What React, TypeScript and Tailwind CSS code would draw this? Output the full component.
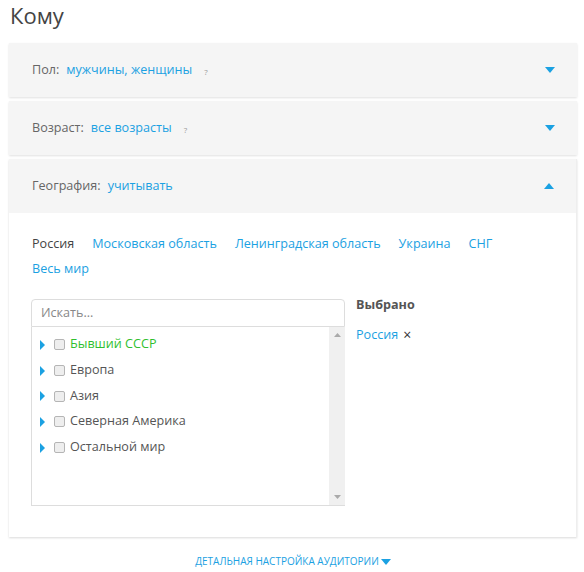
const blue = "text-[#1ba1e2]";

const Caret = ({ up = false }: { up?: boolean }) => (
  <svg width="10" height="6" viewBox="0 0 10 6" className="fill-[#1ba1e2]">
    {up ? <path d="M0 6 L5 0 L10 6 Z" /> : <path d="M0 0 L10 0 L5 6 Z" />}
  </svg>
);

const Header = ({ label, value, hint = false, up = false }: { label: string; value: string; hint?: boolean; up?: boolean }) => (
  <div className="flex items-center h-[54px] pl-[23px] pr-[22px] bg-[#f5f5f5]">
    <span className="text-[#666]">{label}:</span>
    <span className={`ml-[7px] ${blue}`}>{value}</span>
    {hint && <span className="ml-[12px] text-[8px] text-[#999] mt-[3px]">?</span>}
    <span className="ml-auto">
      <Caret up={up} />
    </span>
  </div>
);

const regions = ["Бывший СССР", "Европа", "Азия", "Северная Америка", "Остальной мир"];

export default function App() {
  return (
    <div className="w-[584px] h-[572px] bg-white font-['Open_Sans',sans-serif] text-[12.6px] text-[#555] overflow-hidden">
      <h1 className="pl-[10px] text-[22px] leading-[30px] text-[#444] font-normal">Кому</h1>
      <div className="px-[9px] pt-[13px] pr-[7px] flex flex-col gap-[4px]">
        <div className="shadow-[0_1px_2px_rgba(0,0,0,0.12)]">
          <Header label="Пол" value="мужчины, женщины" hint />
        </div>
        <div className="shadow-[0_1px_2px_rgba(0,0,0,0.12)]">
          <Header label="Возраст" value="все возрасты" hint />
        </div>
        <div className="shadow-[0_1px_2px_rgba(0,0,0,0.15)] border-r border-[#eee]">
          <Header label="География" value="учитывать" up />
          <div className="bg-white pt-[18px] pb-[31px] pl-[23px] pr-[23px]">
            <div className="flex flex-wrap gap-x-[18px] leading-[25px]">
              <span className="text-[#444]">Россия</span>
              <span className={blue}>Московская область</span>
              <span className={blue}>Ленинградская область</span>
              <span className={blue}>Украина</span>
              <span className={blue}>СНГ</span>
              <span className={blue}>Весь мир</span>
            </div>
            <div className="flex mt-[18px]">
              <div className="w-[314px] -ml-px">
                <div className="h-[28px] border border-[#ddd] rounded-t-[4px] flex items-center pl-[9px] text-[#888]">
                  Искать...
                </div>
                <div className="flex h-[179px] border-l border-b border-[#ddd]">
                  <div className="flex-1 pt-[5px]">
                    {regions.map((r, i) => (
                      <div key={r} className="flex items-center h-[25.7px] pl-[8px]">
                        <svg width="5" height="10" viewBox="0 0 5 10" className="fill-[#1ba1e2]">
                          <path d="M0 0 L5 5 L0 10 Z" />
                        </svg>
                        <span className="ml-[9px] w-[11px] h-[11px] rounded-[2px] border border-[#b5b5b5] bg-[#eee]" />
                        <span className={`ml-[5px] ${i === 0 ? "text-[#2fbf2f]" : "text-[#555]"}`}>{r}</span>
                      </div>
                    ))}
                  </div>
                  <div className="w-[16px] bg-[#f0f0f0] flex flex-col items-center justify-between py-[6px]">
                    <svg width="7" height="4" viewBox="0 0 7 4" className="fill-[#aaa]">
                      <path d="M0 4 L3.5 0 L7 4 Z" />
                    </svg>
                    <svg width="7" height="4" viewBox="0 0 7 4" className="fill-[#aaa]">
                      <path d="M0 0 L7 0 L3.5 4 Z" />
                    </svg>
                  </div>
                </div>
              </div>
              <div className="ml-[11px]">
                <div className="font-bold text-[#555] leading-[14px] mt-[-1px]">Выбрано</div>
                <div className="mt-[14px] flex items-center">
                  <span className={blue}>Россия</span>
                  <span className="ml-[5px] text-[#333] text-[14px] leading-none">×</span>
                </div>
              </div>
            </div>
          </div>
        </div>
      </div>
      <div className="flex justify-center items-center mt-[17px] pl-[2px]">
        <span className={`text-[10px] ${blue} uppercase`}>Детальная настройка аудитории</span>
        <span className="ml-[2px]">
          <Caret />
        </span>
      </div>
    </div>
  );
}
